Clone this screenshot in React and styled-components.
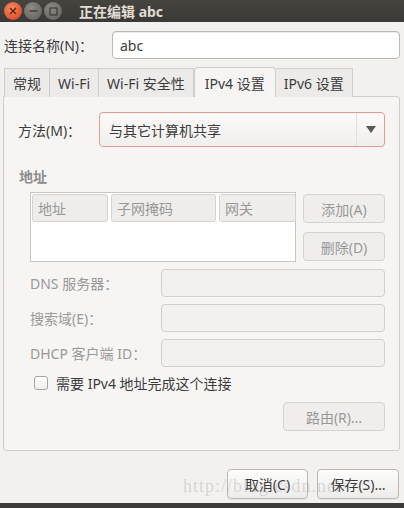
import React from 'react'
import styled, { createGlobalStyle } from 'styled-components'

const Global = createGlobalStyle`
  html, body { margin: 0; padding: 0; }
  body {
    width: 404px;
    height: 508px;
    overflow: hidden;
    background: #f2f1f0;
    font-family: "Noto Sans", "Noto Sans CJK SC", sans-serif;
    font-size: 14px;
    color: #3c3c3c;
  }
`

const Window = styled.div`
  width: 404px;
  height: 508px;
  display: flex;
  flex-direction: column;
  position: relative;
`

const TitleBar = styled.div`
  height: 22px;
  background: linear-gradient(#46443f, #3a3935);
  display: flex;
  align-items: center;
  padding-left: 4px;
  gap: 1px;
`

const WinButton = styled.div`
  width: 18px;
  height: 18px;
  border-radius: 50%;
  background: ${p => p.close ? 'radial-gradient(circle at 40% 35%, #f58a62, #e2522b 70%)' : 'radial-gradient(circle at 40% 35%, #8d8b86, #6a6864 75%)'};
  display: flex;
  align-items: center;
  justify-content: center;
  margin-right: 1px;
`

const Title = styled.div`
  margin-left: 15px;
  color: #e0ddd6;
  font-weight: bold;
  font-size: 14px;
`

const Body = styled.div`
  flex: 1;
  display: flex;
  flex-direction: column;
  padding: 9px 4px 0 3px;
`

const NameRow = styled.div`
  display: flex;
  align-items: center;
  padding-left: 1px;
`

const NameLabel = styled.div`
  width: 108px;
`

const Entry = styled.div`
  flex: 1;
  height: 28px;
  box-sizing: border-box;
  border: 1px solid ${p => p.disabled ? '#d3cfcb' : '#bdb8b3'};
  border-radius: 4px;
  background: ${p => p.disabled ? '#f2f1f0' : '#fff'};
  display: flex;
  align-items: center;
  padding-left: 7px;
  color: #3c3c3c;
  box-shadow: ${p => p.disabled ? 'none' : 'inset 0 1px 1px rgba(0,0,0,0.08)'};
`

const Tabs = styled.div`
  display: flex;
  align-items: flex-end;
  margin-top: 7px;
  padding-left: 1px;
  height: 30px;
`

const Tab = styled.div`
  height: ${p => p.active ? '30px' : '29px'};
  box-sizing: border-box;
  padding: 0 ${p => p.active ? 10 : 8}px;
  display: flex;
  align-items: center;
  border: 1px solid #d2cdc8;
  border-bottom: none;
  border-left: ${p => p.first || p.active ? '1px solid #d2cdc8' : 'none'};
  border-radius: ${p => p.active ? '4px 4px 0 0' : '0'};
  background: ${p => p.active ? '#f6f5f4' : '#ecebea'};
  color: #3c3c3c;
  position: relative;
  top: 1px;
  z-index: ${p => p.active ? 2 : 1};
`

const Panel = styled.div`
  height: 355px;
  box-sizing: border-box;
  border: 1px solid #d2cdc8;
  border-radius: 0 3px 3px 3px;
  background: #f6f5f4;
  padding: 15px 14px 0 14px;
  display: flex;
  flex-direction: column;
`

const MethodRow = styled.div`
  display: flex;
  align-items: center;
`

const MethodLabel = styled.div`
  width: 81px;
  flex: none;
`

const Combo = styled.div`
  flex: 1;
  height: 35px;
  box-sizing: border-box;
  border: 1px solid #dc9d8f;
  border-radius: 4px;
  background: linear-gradient(#fbfaf9, #f1efed);
  display: flex;
  align-items: center;
`

const ComboText = styled.div`
  flex: 1;
  padding-left: 9px;
`

const ComboArrow = styled.div`
  width: 27px;
  height: 100%;
  border-left: 1px solid #e2dedb;
  display: flex;
  align-items: center;
  justify-content: center;
`

const Section = styled.div`
  margin-top: 19px;
  color: #8e8c89;
  font-weight: bold;
  padding-left: 1px;
`

const Indent = styled.div`
  padding-left: 12px;
  display: flex;
  flex-direction: column;
`

const AddrRow = styled.div`
  display: flex;
  gap: 7px;
  margin-top: 6px;
`

const Table = styled.div`
  width: 266px;
  height: 70px;
  box-sizing: border-box;
  border: 1px solid #c9c5c1;
  background: #fff;
  padding: 1px;
`

const HeaderRow = styled.div`
  display: grid;
  grid-template-columns: 76px 105px 77px;
  gap: 3px;
  height: 28px;
`

const HeaderCell = styled.div`
  border: 1px solid #d6d2ce;
  border-radius: 3px;
  background: #eeedec;
  color: #9a9896;
  display: flex;
  align-items: center;
  padding-left: 5px;
`

const SideButtons = styled.div`
  flex: 1;
  display: flex;
  flex-direction: column;
  gap: 9px;
  padding-top: 2px;
`

const Button = styled.div`
  height: ${p => p.h || 29}px;
  width: ${p => p.w ? p.w + 'px' : 'auto'};
  box-sizing: border-box;
  border: 1px solid ${p => p.disabled ? '#d6d2ce' : '#bcb7b2'};
  border-radius: 4px;
  background: ${p => p.disabled ? '#efeeed' : 'linear-gradient(#fcfcfb, #eeecea)'};
  color: ${p => p.disabled ? '#9a9896' : '#3c3c3c'};
  display: flex;
  align-items: center;
  justify-content: center;
  box-shadow: ${p => p.disabled ? 'none' : '0 1px 0 rgba(0,0,0,0.05)'};
  position: relative;
  z-index: 1;
`

const FieldList = styled.div`
  display: flex;
  flex-direction: column;
  gap: 7px;
  margin-top: 7px;
`

const Field = styled.div`
  display: flex;
  align-items: center;
`

const FieldLabel = styled.div`
  width: 131px;
  flex: none;
  color: #9a9896;
`

const CheckRow = styled.div`
  display: flex;
  align-items: center;
  margin-top: 6px;
  padding-left: 4px;
  gap: 8px;
`

const Box = styled.div`
  width: 14px;
  height: 14px;
  box-sizing: border-box;
  border: 1px solid #a8a39e;
  border-radius: 3px;
  background: linear-gradient(#fff, #f0efee);
`

const RouteRow = styled.div`
  display: flex;
  justify-content: flex-end;
  margin-top: 9px;
`

const Footer = styled.div`
  display: flex;
  justify-content: flex-end;
  gap: 9px;
  margin-top: 18px;
  padding-right: 1px;
`

const BottomStrip = styled.div`
  margin-top: auto;
  height: 5px;
  background: #3c3b37;
`

const Watermark = styled.div`
  position: absolute;
  left: 183px;
  top: 476px;
  font-family: "Liberation Serif", serif;
  font-size: 18px;
  color: rgba(120, 120, 120, 0.25);
  letter-spacing: 1px;
  pointer-events: none;
  z-index: 2;
`

const App = () => (
  <Window>
    <Global />
    <TitleBar>
      <WinButton close>
        <svg width="8" height="8" viewBox="0 0 8 8"><path d="M1 1L7 7M7 1L1 7" stroke="#5a2414" strokeWidth="1.4" /></svg>
      </WinButton>
      <WinButton>
        <svg width="9" height="8" viewBox="0 0 9 8"><path d="M0.5 4H8.5" stroke="#3a3935" strokeWidth="1.4" /></svg>
      </WinButton>
      <WinButton>
        <svg width="9" height="9" viewBox="0 0 9 9"><rect x="1" y="1" width="7" height="7" fill="none" stroke="#3a3935" strokeWidth="1.2" /></svg>
      </WinButton>
      <Title>正在编辑 abc</Title>
    </TitleBar>
    <Body>
      <NameRow>
        <NameLabel>连接名称(N)：</NameLabel>
        <Entry>abc</Entry>
      </NameRow>
      <Tabs>
        <Tab first>常规</Tab>
        <Tab>Wi-Fi</Tab>
        <Tab>Wi-Fi 安全性</Tab>
        <Tab active>IPv4 设置</Tab>
        <Tab>IPv6 设置</Tab>
      </Tabs>
      <Panel>
        <MethodRow>
          <MethodLabel>方法(M)：</MethodLabel>
          <Combo>
            <ComboText>与其它计算机共享</ComboText>
            <ComboArrow>
              <svg width="10" height="7" viewBox="0 0 10 7"><path d="M0 0H10L5 7Z" fill="#5a5855" /></svg>
            </ComboArrow>
          </Combo>
        </MethodRow>
        <Section>地址</Section>
        <Indent>
          <AddrRow>
            <Table>
              <HeaderRow>
                <HeaderCell>地址</HeaderCell>
                <HeaderCell>子网掩码</HeaderCell>
                <HeaderCell>网关</HeaderCell>
              </HeaderRow>
            </Table>
            <SideButtons>
              <Button disabled>添加(A)</Button>
              <Button disabled>删除(D)</Button>
            </SideButtons>
          </AddrRow>
          <FieldList>
            <Field><FieldLabel>DNS 服务器：</FieldLabel><Entry disabled /></Field>
            <Field><FieldLabel>搜索域(E)：</FieldLabel><Entry disabled /></Field>
            <Field><FieldLabel>DHCP 客户端 ID：</FieldLabel><Entry disabled /></Field>
          </FieldList>
          <CheckRow>
            <Box />
            <span>需要 IPv4 地址完成这个连接</span>
          </CheckRow>
          <RouteRow>
            <Button disabled w={102}>路由(R)…</Button>
          </RouteRow>
        </Indent>
      </Panel>
      <Footer>
        <Button w={81} h={30}>取消(C)</Button>
        <Button w={82} h={30}>保存(S)…</Button>
      </Footer>
    </Body>
    <BottomStrip />
    <Watermark>http://blog.csdn.net/</Watermark>
  </Window>
)

export default App
